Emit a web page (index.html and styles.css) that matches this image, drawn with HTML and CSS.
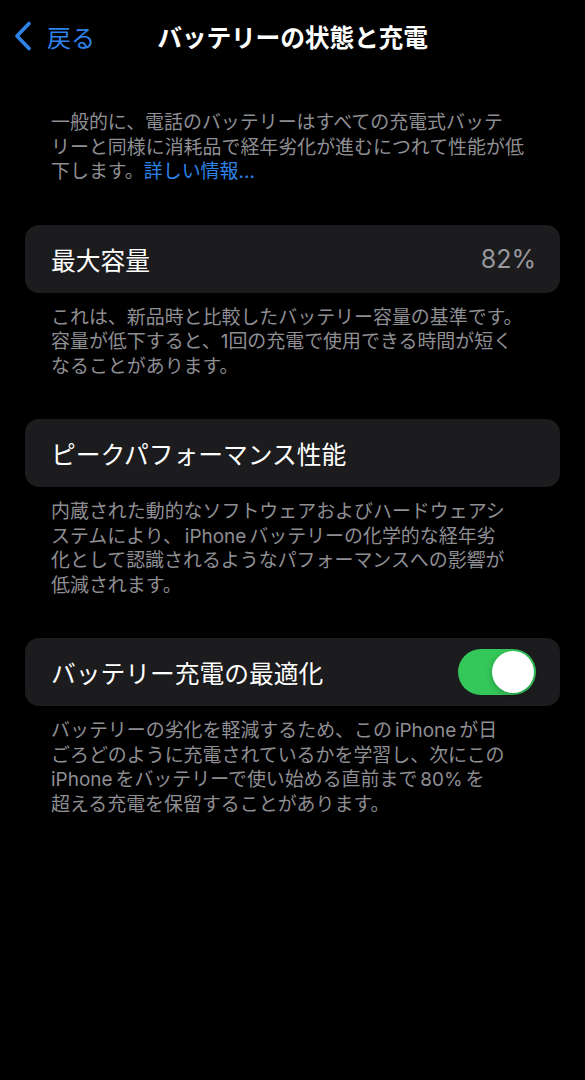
FILE: index.html
```html
<!DOCTYPE html>
<html lang="ja">
<head>
    <meta charset="UTF-8">
    <meta name="viewport" content="width=device-width, initial-scale=1.0">
    <title>バッテリーの状態と充電</title>
    <link rel="stylesheet" href="styles.css">
</head>
<body>
    <div class="nav">
        <a class="back" href="#">
            <svg class="chevron" width="18" height="30" viewBox="0 0 18 30">
                <path d="M15 2.5 L3 15 L15 27.5" fill="none" stroke="currentColor" stroke-width="3.6" stroke-linecap="round" stroke-linejoin="round"/>
            </svg>
            <span>戻る</span>
        </a>
        <h1>バッテリーの状態と充電</h1>
        <div></div>
    </div>

    <div class="content">
        <p class="intro">
            一般的に、電話のバッテリーはすべての充電式バッテ<br>リーと同様に消耗品で経年劣化が進むにつれて性能が低<br>下します。<a class="link" href="#">詳しい情報...</a>
        </p>

        <div class="cell">
            <span class="label">最大容量</span>
            <span class="value">82%</span>
        </div>
        <p class="footnote">
            これは、新品時と比較したバッテリー容量の基準です。<br>容量が低下すると、1回の充電で使用できる時間が短く<br>なることがあります。
        </p>

        <div class="cell">
            <span class="label">ピークパフォーマンス性能</span>
        </div>
        <p class="footnote">
            内蔵された動的なソフトウェアおよびハードウェアシ<br>ステムにより、<span class="latin">iPhone</span>バッテリーの化学的な経年劣<br>化として認識されるようなパフォーマンスへの影響が<br>低減されます。
        </p>

        <div class="cell">
            <span class="label">バッテリー充電の最適化</span>
            <label class="switch">
                <input type="checkbox" checked>
                <span class="track"><span class="knob"></span></span>
            </label>
        </div>
        <p class="footnote">
            バッテリーの劣化を軽減するため、この<span class="latin">iPhone</span>が日<br>ごろどのように充電されているかを学習し、次にこの<br><span class="latin first">iPhone</span>をバッテリーで使い始める直前まで<span class="latin">80%</span>を<br>超える充電を保留することがあります。
        </p>
    </div>
</body>
</html>
```

FILE: styles.css
```css
* {
    margin: 0;
    padding: 0;
    box-sizing: border-box;
}

body {
    background: #000;
    color: #fff;
    font-family: Inter, "Noto Sans CJK JP", sans-serif;
    min-height: 100vh;
}

a {
    text-decoration: none;
}

/* top navigation bar */
.nav {
    height: 72px;
    display: grid;
    grid-template-columns: 1fr auto 1fr;
    align-items: center;
}

.back {
    display: flex;
    align-items: center;
    gap: 15px;
    padding-left: 14px;
    color: #2e83ea;
    font-size: 24px;
}

.chevron {
    display: block;
}

.nav h1 {
    font-size: 24.8px;
    font-weight: 700;
    letter-spacing: -0.2px;
    color: #fff;
}

.content {
    padding: 39px 25px 0;
}

.intro,
.footnote {
    font-size: 18.95px;
    line-height: 24.5px;
    color: #8e8e93;
    padding: 0 26px 40px;
}

.footnote {
    padding-top: 13px;
}

/* spacing iOS puts between latin words and kana */
.latin {
    margin: 0 3px;
}

.latin.first {
    margin-left: 0;
}

.link {
    color: #2e83ea;
}

/* grouped cell */
.cell {
    height: 68px;
    background: #1c1c1e;
    border-radius: 14px;
    padding: 0 24px 0 26px;
    display: flex;
    align-items: center;
    justify-content: space-between;
}

.label {
    font-size: 24.75px;
    color: #fff;
}

.value {
    font-size: 25px;
    color: #98989e;
}

/* toggle switch */
.switch {
    display: block;
}

.switch input {
    display: none;
}

.track {
    display: block;
    width: 78px;
    height: 46px;
    border-radius: 23px;
    background: #39393d;
    position: relative;
    transition: background 0.2s ease;
}

.knob {
    position: absolute;
    top: 2px;
    left: 2px;
    width: 42px;
    height: 42px;
    border-radius: 50%;
    background: #fff;
    box-shadow: 0 2px 6px rgba(0, 0, 0, 0.25);
    transition: left 0.2s ease;
}

.switch input:checked + .track {
    background: #34c759;
}

.switch input:checked + .track .knob {
    left: 34px;
}
```
